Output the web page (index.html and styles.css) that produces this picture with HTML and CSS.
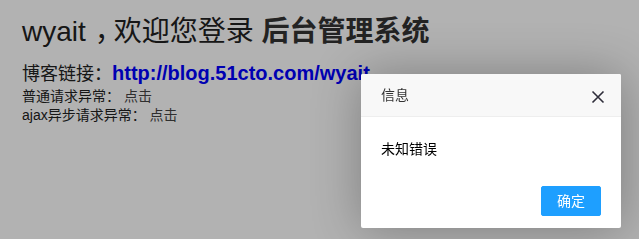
FILE: index.html
```html
<!DOCTYPE html>
<html lang="zh-CN">
<head>
<meta charset="utf-8">
<title>后台管理系统</title>
<link rel="stylesheet" href="styles.css">
</head>
<body>
<div class="page">
  <h2 class="welcome">wyait<span class="comma">，</span>欢迎您登录 <b>后台管理系统</b></h2>
  <div class="blog">博客链接：<a class="blog-link" href="#">http://blog.51cto.com/wyait</a></div>
  <div class="row">普通请求异常： <a class="act" href="#">点击</a></div>
  <div class="row">ajax异步请求异常： <a class="act" href="#">点击</a></div>
</div>
<div class="shade"></div>
<div class="layer">
  <div class="layer-title">信息</div>
  <span class="layer-close" aria-label="关闭">
    <svg width="16" height="16" viewBox="0 0 16 16"><path d="M2.5 2.5 L13.5 13.5 M13.5 2.5 L2.5 13.5" stroke="#2f2e3a" stroke-width="1.6" fill="none"/></svg>
  </span>
  <div class="layer-content">未知错误</div>
  <div class="layer-btns"><a class="btn" href="#">确定</a></div>
</div>
</body>
</html>
```

FILE: styles.css
```css
html, body {
  margin: 0;
  padding: 0;
  background: #fff;
  font-family: "Liberation Sans", "Noto Sans CJK SC", sans-serif;
  color: #333;
}
.page {
  padding: 14px 0 0 22px;
}
.welcome {
  margin: 0;
  font-size: 28px;
  line-height: 36px;
  font-weight: normal;
  color: #222;
}
.comma {
  padding-left: 9px;
  letter-spacing: -9px;
}
.welcome b {
  font-weight: bold;
  color: #333;
}
.blog {
  margin-top: 10px;
  font-size: 18px;
  line-height: 26px;
  color: #222;
}
.blog-link {
  font-size: 20px;
  font-weight: bold;
  color: #0000ff;
  text-decoration: none;
}
.row {
  font-size: 14px;
  line-height: 19px;
  color: #222;
}
.act {
  color: #444;
  text-decoration: none;
}
.shade {
  position: fixed;
  left: 0;
  top: 0;
  right: 0;
  bottom: 0;
  background: rgba(0, 0, 0, 0.3);
}
.layer {
  position: absolute;
  left: 361px;
  top: 74px;
  width: 260px;
  background: #fff;
  border-radius: 2px;
  box-shadow: 1px 1px 50px rgba(0, 0, 0, 0.3);
  font-size: 14px;
  font-family: "Liberation Sans", "Noto Sans CJK SC", sans-serif;
}
.layer-title {
  height: 42px;
  line-height: 42px;
  padding: 0 80px 0 20px;
  background: #f8f8f8;
  border-bottom: 1px solid #eee;
  border-radius: 2px 2px 0 0;
  color: #333;
}
.layer-close {
  position: absolute;
  right: 15px;
  top: 15px;
  width: 16px;
  height: 16px;
  display: block;
}
.layer-close svg {
  display: block;
}
.layer-content {
  padding: 20px;
  line-height: 24px;
  color: #000;
}
.layer-btns {
  text-align: right;
  padding: 0 15px 12px;
}
.btn {
  display: inline-block;
  height: 28px;
  line-height: 28px;
  margin: 5px 5px 0;
  padding: 0 15px;
  border: 1px solid #1e9fff;
  background: #1e9fff;
  color: #fff;
  border-radius: 2px;
  text-decoration: none;
  vertical-align: top;
}
```
